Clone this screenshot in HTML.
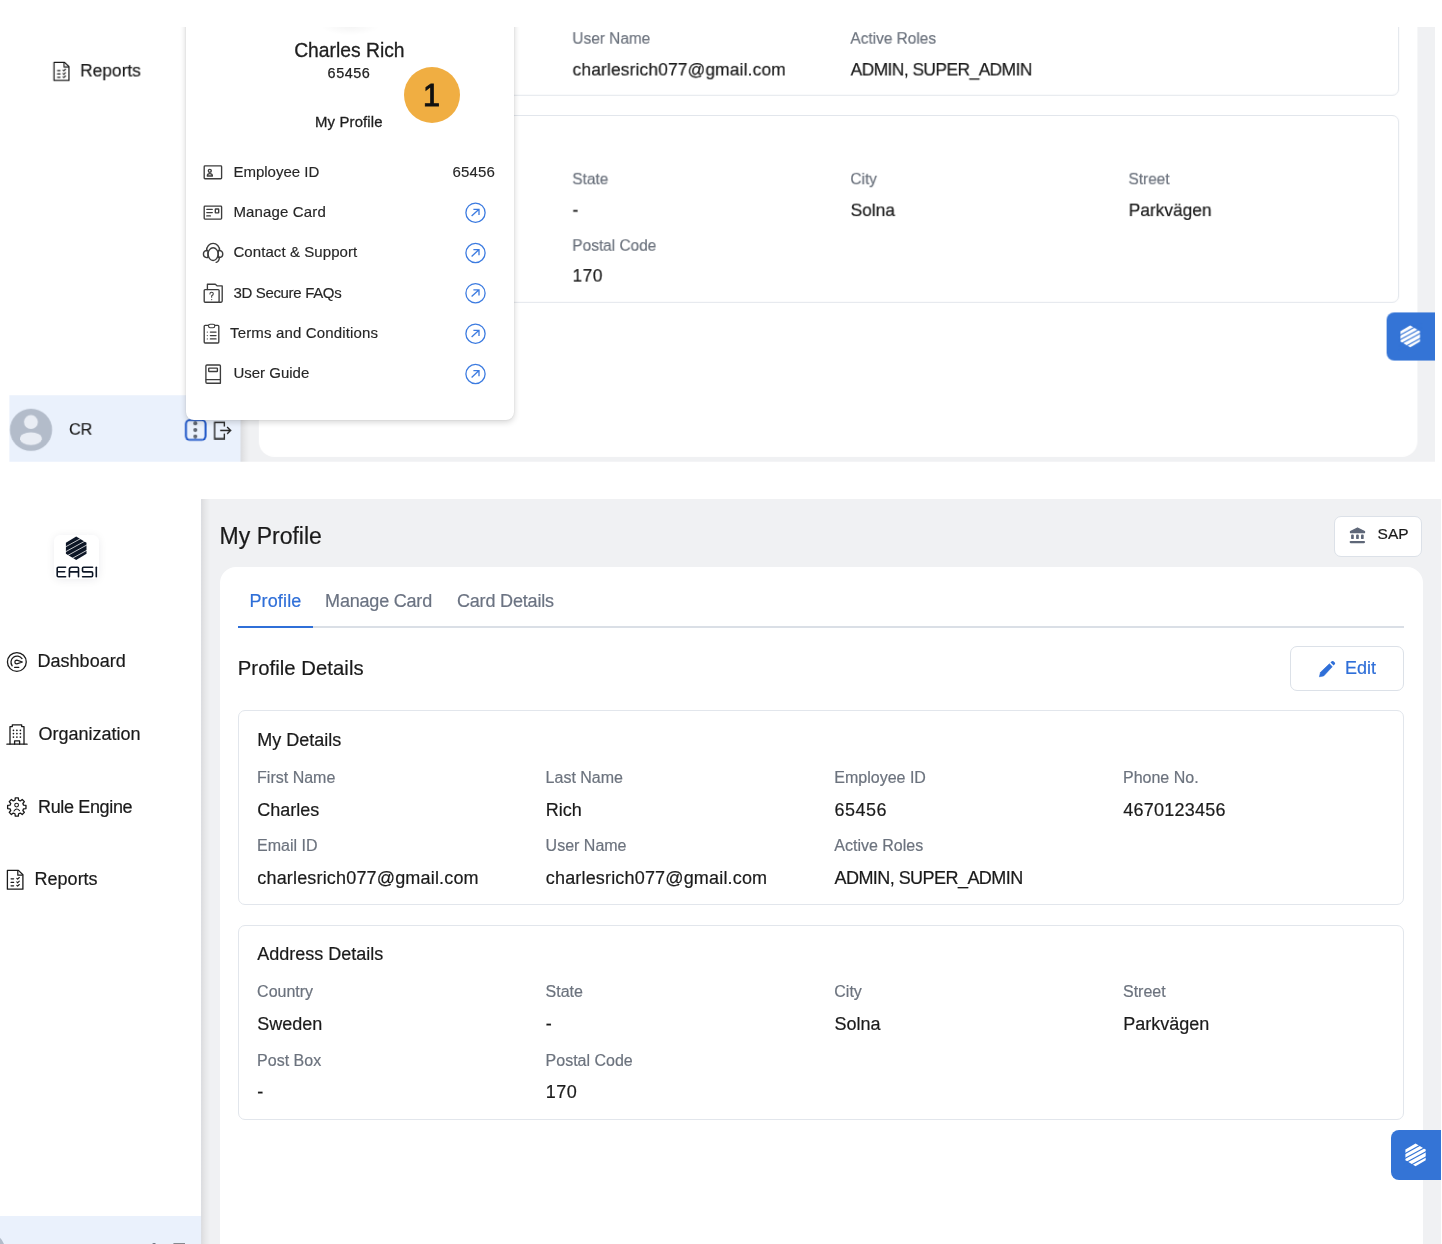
<!DOCTYPE html>
<html><head><meta charset="utf-8"><title>My Profile</title>
<style>
html,body{margin:0;padding:0;}
body{width:1442px;height:1244px;position:relative;overflow:hidden;background:#fff;font-family:"Liberation Sans", sans-serif;}
.t{position:absolute;white-space:nowrap;line-height:1;-webkit-text-stroke-width:0.2px;}
.b{position:absolute;}
svg.b{overflow:visible;}
.view{position:absolute;overflow:hidden;}
.pg{position:absolute;left:0;top:0;width:1px;height:1px;will-change:transform;}
</style></head><body>
<div class="view" style="left:9px;top:27px;width:1426px;height:434.6px;">
  <div class="pg" style="left:-9px;top:-27px;transform-origin:0 0;transform:matrix(0.9631,0,0,0.9631,46.9,-775.9);">
<div class="b" style="left:-39.35px;top:499.00px;width:1480.64px;height:785.91px;background:#fff"></div>
<div class="b" style="left:200.80px;top:499.00px;width:1240.48px;height:785.91px;background:#F0F1F3"></div>
<div class="b" style="left:200.80px;top:499.00px;width:9.00px;height:785.91px;background:linear-gradient(90deg,#DADDE2 0px,#DFDFE1 1.5px,#E6E7E9 4px,#F0F1F3 9px)"></div>
<div class="b" style="left:54.30px;top:534.50px;width:44.50px;height:44.30px;background:#fff;border-radius:6px;box-shadow:0 1px 8px rgba(20,30,50,0.08)"></div>
<svg class="b" style="left:0.00px;top:0.00px;" width="110" height="600" viewBox="0 0 110 600"><polygon points="76.2,536.6 86.5,542.8502500000001 86.5,553.6497499999999 76.2,559.9 65.9,553.6497499999999 65.9,542.8502500000001" fill="#0D1626"/><line x1="63.900000000000006" y1="547.79" x2="88.5" y2="534.26" stroke="#fff" stroke-width="0.75"/><line x1="63.900000000000006" y1="552.68" x2="88.5" y2="539.15" stroke="#fff" stroke-width="0.75"/><line x1="63.900000000000006" y1="557.58" x2="88.5" y2="544.05" stroke="#fff" stroke-width="0.75"/><line x1="63.900000000000006" y1="562.94" x2="88.5" y2="549.41" stroke="#fff" stroke-width="0.75"/><path d="M65.6 567.2 H58.3 Q57.2 567.2 57.2 568.3 V575.6 Q57.2 576.7 58.3 576.7 H65.6 M57.4 571.8 H64.6" fill="none" stroke="#0D1626" stroke-width="1.6" stroke-linecap="round" stroke-linejoin="round"/><path d="M69.4 576.8 V569.5 Q69.4 567.2 71.7 567.2 H77.4 Q78.5 567.2 78.5 568.3 V576.8 M69.6 571.9 H78.3" fill="none" stroke="#0D1626" stroke-width="1.6" stroke-linecap="round" stroke-linejoin="round"/><path d="M92.6 567.2 H83.6 Q82.5 567.2 82.5 568.3 V570.8 Q82.5 571.9 83.6 571.9 H91.5 Q92.6 571.9 92.6 573 V575.6 Q92.6 576.7 91.5 576.7 H82.6" fill="none" stroke="#0D1626" stroke-width="1.6" stroke-linecap="round" stroke-linejoin="round"/><path d="M96.3 567.2 V576.8" fill="none" stroke="#0D1626" stroke-width="1.6" stroke-linecap="round" stroke-linejoin="round"/></svg>
<svg class="b" style="left:0.00px;top:0.00px;" width="40" height="900" viewBox="0 0 40 900"><circle cx="16.85" cy="661.95" r="9.4" fill="none" stroke="#1A1A1A" stroke-width="1.3" stroke-linecap="round" stroke-linejoin="round"/><path d="M22.0 658.6 A6.1 6.1 0 1 0 12.15 665.8" fill="none" stroke="#1A1A1A" stroke-width="1.3" stroke-linecap="round" stroke-linejoin="round"/><path d="M22.4 662.0 L16.8 660.1 A1.9 1.9 0 0 0 16.8 663.9 Z" fill="none" stroke="#1A1A1A" stroke-width="1.2" stroke-linejoin="round"/><path d="M14.6 667.3 H18.8" fill="none" stroke="#1A1A1A" stroke-width="1.3" stroke-linecap="round" stroke-linejoin="round"/><path d="M10 744 V726.6 H12.3 V724.8 H21.7 V726.6 H24 V744" fill="none" stroke="#1A1A1A" stroke-width="1.3" stroke-linecap="round" stroke-linejoin="round"/><path d="M6.9 744.2 H27.1" fill="none" stroke="#1A1A1A" stroke-width="1.3" stroke-linecap="round" stroke-linejoin="round"/><path d="M14.6 744 V740.9 H19.6 V744" fill="none" stroke="#1A1A1A" stroke-width="1.3" stroke-linecap="round" stroke-linejoin="round"/><circle cx="13.45" cy="730.3" r="0.85" fill="#1A1A1A"/><circle cx="13.45" cy="733.6" r="0.85" fill="#1A1A1A"/><circle cx="13.45" cy="737.1" r="0.85" fill="#1A1A1A"/><circle cx="16.9" cy="730.3" r="0.85" fill="#1A1A1A"/><circle cx="16.9" cy="733.6" r="0.85" fill="#1A1A1A"/><circle cx="16.9" cy="737.1" r="0.85" fill="#1A1A1A"/><circle cx="20.4" cy="730.3" r="0.85" fill="#1A1A1A"/><circle cx="20.4" cy="733.6" r="0.85" fill="#1A1A1A"/><circle cx="20.4" cy="737.1" r="0.85" fill="#1A1A1A"/><path d="M15.01 800.23 L15.27 797.83 L18.33 797.83 L18.59 800.23 L20.32 800.95 L22.21 799.43 L24.37 801.59 L22.85 803.48 L23.57 805.21 L25.97 805.47 L25.97 808.53 L23.57 808.79 L22.85 810.52 L24.37 812.41 L22.21 814.57 L20.32 813.05 L18.59 813.77 L18.33 816.17 L15.27 816.17 L15.01 813.77 L13.28 813.05 L11.39 814.57 L9.23 812.41 L10.75 810.52 L10.03 808.79 L7.63 808.53 L7.63 805.47 L10.03 805.21 L10.75 803.48 L9.23 801.59 L11.39 799.43 L13.28 800.95Z" fill="none" stroke="#1A1A1A" stroke-width="1.3" stroke-linecap="round" stroke-linejoin="round"/><circle cx="16.6" cy="805.1" r="1.9" fill="none" stroke="#1A1A1A" stroke-width="1.1"/><path d="M14.0 811.0 Q16.7 807.3 19.5 810.7" fill="none" stroke="#1A1A1A" stroke-width="1.1" stroke-linecap="round"/><path d="M7.4 870.4 H18.4 L22.9 874.8 V889.2 H7.4 Z" fill="none" stroke="#1A1A1A" stroke-width="1.3" stroke-linecap="round" stroke-linejoin="round"/><path d="M17.8 870.6 V875.2 H22.7" fill="none" stroke="#1A1A1A" stroke-width="1.2" stroke-linejoin="round"/><path d="M11.1 878.8 H13.6" fill="none" stroke="#1A1A1A" stroke-width="1.3" stroke-linecap="round" stroke-linejoin="round"/><path d="M16.8 878.3 L17.6 879.1999999999999 L19.3 877.5" fill="none" stroke="#1A1A1A" stroke-width="1.1" stroke-linecap="round" stroke-linejoin="round"/><path d="M11.1 882.4 H13.6" fill="none" stroke="#1A1A1A" stroke-width="1.3" stroke-linecap="round" stroke-linejoin="round"/><path d="M16.8 881.9 L17.6 882.8 L19.3 881.1" fill="none" stroke="#1A1A1A" stroke-width="1.1" stroke-linecap="round" stroke-linejoin="round"/><path d="M11.1 885.8 H13.6" fill="none" stroke="#1A1A1A" stroke-width="1.3" stroke-linecap="round" stroke-linejoin="round"/><path d="M16.8 885.3 L17.6 886.1999999999999 L19.3 884.5" fill="none" stroke="#1A1A1A" stroke-width="1.1" stroke-linecap="round" stroke-linejoin="round"/></svg>
<div class="t" style="left:37.60px;top:651.96px;font-size:18px;color:#1A1A1A;font-weight:400;">Dashboard</div>
<div class="t" style="left:38.50px;top:724.66px;font-size:18px;color:#1A1A1A;font-weight:400;">Organization</div>
<div class="t" style="left:38.00px;top:797.56px;font-size:18px;color:#1A1A1A;font-weight:400;letter-spacing:-0.35px">Rule Engine</div>
<div class="t" style="left:34.60px;top:869.76px;font-size:18px;color:#1A1A1A;font-weight:400;">Reports</div>
<div class="b" style="left:-39.35px;top:1215.97px;width:239.95px;height:68.94px;background:#EAF1FC"></div>
<svg class="b" style="left:-40.00px;top:1200.00px;" width="240" height="90" viewBox="-40 1200 240 90"><circle cx="-16.51" cy="1251.95" r="21.91" fill="#B3BCCA"/><circle cx="-16.61" cy="1243.80" r="7.27" fill="#E9EDF4"/><ellipse cx="-16.61" cy="1261.03" rx="11.42" ry="6.65" fill="#E9EDF4"/><circle cx="154.09" cy="1245.15" r="2.08" fill="#5F6672"/><circle cx="154.09" cy="1252.10" r="2.08" fill="#5F6672"/><circle cx="154.09" cy="1258.85" r="2.08" fill="#5F6672"/><rect x="144.33" y="1241.72" width="20.35" height="20.56" rx="4.15" fill="none" stroke="#1E56C8" stroke-width="2.08"/><path d="M184.30 1248.57 V1244.32 H174.13 V1260.93 H184.30 V1255.74" fill="none" stroke="#222" stroke-width="1.40" stroke-linecap="butt" stroke-linejoin="miter"/><path d="M179.94 1252.52 H190.74 M187.10 1248.99 L190.74 1252.52 L187.10 1256.05" fill="none" stroke="#222" stroke-width="1.40" stroke-linecap="butt" stroke-linejoin="miter"/></svg>
<div class="t" style="left:22.98px;top:1244.11px;font-size:16.8px;color:#1A1A1A;font-weight:400;">CR</div>
<div class="t" style="left:219.60px;top:524.93px;font-size:23px;color:#1A1A1A;font-weight:400;">My Profile</div>
<div class="b" style="left:1334.20px;top:516.10px;width:88.00px;height:41.30px;background:#fff;border:1px solid #DCE1E8;border-radius:7px;box-sizing:border-box"></div>
<svg class="b" style="left:1340.00px;top:520.00px;" width="30" height="30" viewBox="1340 520 30 30"><path d="M1350.4 532.6 V531.4 L1357.5 527.9 L1364.6 531.4 V532.6 Z" fill="#5E6778" stroke="#5E6778" stroke-width="1.1" stroke-linejoin="round"/><rect x="1351.1" y="534.6" width="2.7" height="4.5" rx="0.9" fill="#5E6778"/><rect x="1356.1" y="534.6" width="2.7" height="4.5" rx="0.9" fill="#5E6778"/><rect x="1361.0" y="534.6" width="2.7" height="4.5" rx="0.9" fill="#5E6778"/><rect x="1349.6" y="540.9" width="15.5" height="2.3" rx="1.1" fill="#5E6778"/></svg>
<div class="t" style="left:1377.60px;top:526.28px;font-size:15.5px;color:#1A1A1A;font-weight:400;">SAP</div>
<div class="b" style="left:220.00px;top:566.50px;width:1202.70px;height:713.50px;background:#fff;border-radius:16px"></div>
<div class="t" style="left:249.40px;top:591.56px;font-size:18px;color:#2F6FD8;font-weight:400;letter-spacing:0.15px">Profile</div>
<div class="t" style="left:325.10px;top:591.56px;font-size:18px;color:#6B7382;font-weight:400;letter-spacing:-0.2px">Manage Card</div>
<div class="t" style="left:456.90px;top:591.56px;font-size:18px;color:#6B7382;font-weight:400;letter-spacing:-0.17px">Card Details</div>
<div class="b" style="left:238.00px;top:625.90px;width:1166.20px;height:2.20px;background:#DADFE6"></div>
<div class="b" style="left:238.00px;top:625.60px;width:75.20px;height:2.60px;background:#2F6FD8"></div>
<div class="t" style="left:237.80px;top:658.42px;font-size:20.3px;color:#1A1A1A;font-weight:400;letter-spacing:0.05px">Profile Details</div>
<div class="b" style="left:1290.10px;top:646.30px;width:114.00px;height:45.00px;background:#fff;border:1px solid #DCE1E8;border-radius:7px;box-sizing:border-box"></div>
<svg class="b" style="left:1310.00px;top:650.00px;" width="30" height="30" viewBox="1310 650 30 30"><path d="M1319.4 676.8 L1320.5 672.3 L1329.4 663.8 L1332.3 666.7 L1323.7 675.9 Z" fill="#2F6FD8" stroke="#2F6FD8" stroke-width="0.6" stroke-linejoin="round"/><path d="M1330.5 662.5 L1331.7 661.3 Q1332.6 660.5 1333.5 661.3 L1334.8 662.6 Q1335.6 663.5 1334.8 664.3 L1333.6 665.6 Z" fill="#2F6FD8"/></svg>
<div class="t" style="left:1345.00px;top:659.46px;font-size:18px;color:#2F6FD8;font-weight:400;">Edit</div>
<div class="b" style="left:238.30px;top:710.30px;width:1165.90px;height:195.00px;background:#fff;border:1px solid #E2E6EC;border-radius:7px;box-sizing:border-box"></div>
<div class="t" style="left:257.20px;top:730.56px;font-size:18px;color:#1A1A1A;font-weight:400;">My Details</div>
<div class="t" style="left:257.10px;top:769.96px;font-size:16px;color:#6C737E;font-weight:400;">First Name</div>
<div class="t" style="left:257.30px;top:800.56px;font-size:18px;color:#1B1B1B;font-weight:400;letter-spacing:0px">Charles</div>
<div class="t" style="left:545.60px;top:769.96px;font-size:16px;color:#6C737E;font-weight:400;">Last Name</div>
<div class="t" style="left:545.80px;top:800.56px;font-size:18px;color:#1B1B1B;font-weight:400;letter-spacing:0px">Rich</div>
<div class="t" style="left:834.30px;top:769.96px;font-size:16px;color:#6C737E;font-weight:400;">Employee ID</div>
<div class="t" style="left:834.50px;top:800.56px;font-size:18px;color:#1B1B1B;font-weight:400;letter-spacing:0.5px">65456</div>
<div class="t" style="left:1123.00px;top:769.96px;font-size:16px;color:#6C737E;font-weight:400;">Phone No.</div>
<div class="t" style="left:1123.20px;top:800.56px;font-size:18px;color:#1B1B1B;font-weight:400;letter-spacing:0.25px">4670123456</div>
<div class="t" style="left:257.10px;top:838.26px;font-size:16px;color:#6C737E;font-weight:400;">Email ID</div>
<div class="t" style="left:257.30px;top:868.96px;font-size:18px;color:#1B1B1B;font-weight:400;letter-spacing:0.17px">charlesrich077@gmail.com</div>
<div class="t" style="left:545.60px;top:838.26px;font-size:16px;color:#6C737E;font-weight:400;">User Name</div>
<div class="t" style="left:545.80px;top:868.96px;font-size:18px;color:#1B1B1B;font-weight:400;letter-spacing:0.17px">charlesrich077@gmail.com</div>
<div class="t" style="left:834.30px;top:838.26px;font-size:16px;color:#6C737E;font-weight:400;">Active Roles</div>
<div class="t" style="left:834.50px;top:868.96px;font-size:18px;color:#1B1B1B;font-weight:400;letter-spacing:-0.55px">ADMIN, SUPER_ADMIN</div>
<div class="b" style="left:238.30px;top:924.70px;width:1165.90px;height:195.00px;background:#fff;border:1px solid #E2E6EC;border-radius:7px;box-sizing:border-box"></div>
<div class="t" style="left:257.20px;top:944.96px;font-size:18px;color:#1A1A1A;font-weight:400;">Address Details</div>
<div class="t" style="left:257.10px;top:984.36px;font-size:16px;color:#6C737E;font-weight:400;">Country</div>
<div class="t" style="left:257.30px;top:1014.96px;font-size:18px;color:#1B1B1B;font-weight:400;letter-spacing:0px">Sweden</div>
<div class="t" style="left:545.60px;top:984.36px;font-size:16px;color:#6C737E;font-weight:400;">State</div>
<div class="t" style="left:545.80px;top:1014.96px;font-size:18px;color:#1B1B1B;font-weight:400;letter-spacing:0px">-</div>
<div class="t" style="left:834.30px;top:984.36px;font-size:16px;color:#6C737E;font-weight:400;">City</div>
<div class="t" style="left:834.50px;top:1014.96px;font-size:18px;color:#1B1B1B;font-weight:400;letter-spacing:0px">Solna</div>
<div class="t" style="left:1123.00px;top:984.36px;font-size:16px;color:#6C737E;font-weight:400;">Street</div>
<div class="t" style="left:1123.20px;top:1014.96px;font-size:18px;color:#1B1B1B;font-weight:400;letter-spacing:0px">Parkv&auml;gen</div>
<div class="t" style="left:257.10px;top:1052.66px;font-size:16px;color:#6C737E;font-weight:400;">Post Box</div>
<div class="t" style="left:257.30px;top:1083.36px;font-size:18px;color:#1B1B1B;font-weight:400;letter-spacing:0px">-</div>
<div class="t" style="left:545.60px;top:1052.66px;font-size:16px;color:#6C737E;font-weight:400;">Postal Code</div>
<div class="t" style="left:545.80px;top:1083.36px;font-size:18px;color:#1B1B1B;font-weight:400;letter-spacing:0.5px">170</div>
<div class="b" style="left:1390.80px;top:1130.00px;width:50.48px;height:49.80px;background:#3474D6;border-radius:8px 0 0 8px"></div>
<svg class="b" style="left:1395.00px;top:1135.00px;" width="40" height="40" viewBox="1395 1135 40 40"><polygon points="1415.55,1143.4 1425.7,1149.55325 1425.7,1160.14675 1415.55,1166.3 1405.4,1160.14675 1405.4,1149.55325" fill="#fff"/><line x1="1403.4" y1="1154.43" x2="1427.7" y2="1141.07" stroke="#3474D6" stroke-width="1.15"/><line x1="1403.4" y1="1159.24" x2="1427.7" y2="1145.88" stroke="#3474D6" stroke-width="1.15"/><line x1="1403.4" y1="1164.05" x2="1427.7" y2="1150.69" stroke="#3474D6" stroke-width="1.15"/><line x1="1403.4" y1="1169.32" x2="1427.7" y2="1155.95" stroke="#3474D6" stroke-width="1.15"/></svg>
  </div>
  <div class="pg" style="left:-9px;top:-27px;will-change:transform;">
<div class="b" style="left:186.00px;top:-30.00px;width:328.00px;height:450.30px;background:#fff;border-radius:8px;box-shadow:0 2px 6px rgba(0,0,0,0.18),0 0 2px rgba(0,0,0,0.10)"></div>
<div class="b" style="left:318.00px;top:20.00px;width:64.00px;height:16.00px;background:radial-gradient(ellipse at 50% 40%, rgba(0,0,0,0.045), rgba(0,0,0,0) 65%)"></div>
<div class="t" style="left:294.20px;top:40.96px;font-size:19.3px;color:#1F1F1F;font-weight:400;-webkit-text-stroke-width:0.3px">Charles Rich</div>
<div class="t" style="left:327.60px;top:65.81px;font-size:14.4px;color:#222;font-weight:400;letter-spacing:0.55px;-webkit-text-stroke:0.25px #222">65456</div>
<div class="t" style="left:315.00px;top:114.69px;font-size:14.9px;color:#1F1F1F;font-weight:400;letter-spacing:0.15px;-webkit-text-stroke:0.3px #1F1F1F">My Profile</div>
<div class="t" style="left:233.40px;top:163.70px;font-size:15px;color:#262626;font-weight:400;letter-spacing:0px;-webkit-text-stroke:0.15px #262626">Employee ID</div>
<div class="t" style="left:233.40px;top:204.00px;font-size:15px;color:#262626;font-weight:400;letter-spacing:0.15px;-webkit-text-stroke:0.15px #262626">Manage Card</div>
<div class="t" style="left:233.40px;top:244.30px;font-size:15px;color:#262626;font-weight:400;letter-spacing:0.08px;-webkit-text-stroke:0.15px #262626">Contact &amp; Support</div>
<div class="t" style="left:233.40px;top:284.50px;font-size:15px;color:#262626;font-weight:400;letter-spacing:-0.33px;-webkit-text-stroke:0.15px #262626">3D Secure FAQs</div>
<div class="t" style="left:230.00px;top:325.00px;font-size:15px;color:#262626;font-weight:400;letter-spacing:0.16px;-webkit-text-stroke:0.15px #262626">Terms and Conditions</div>
<div class="t" style="left:233.40px;top:365.30px;font-size:15px;color:#262626;font-weight:400;letter-spacing:0px;-webkit-text-stroke:0.15px #262626">User Guide</div>
<div class="t" style="left:452.60px;top:164.20px;font-size:15px;color:#262626;font-weight:400;letter-spacing:0.15px;-webkit-text-stroke:0.15px #262626">65456</div>
<svg class="b" style="left:190.00px;top:150.00px;" width="310" height="250" viewBox="190 150 310 250"><rect x="204.2" y="165.9" width="17.4" height="12.9" rx="0.8" fill="none" stroke="#3D3D3D" stroke-width="1.35" stroke-linecap="round" stroke-linejoin="round"/><circle cx="209.8" cy="170.8" r="1.5" fill="none" stroke="#3D3D3D" stroke-width="1.35" stroke-linecap="round" stroke-linejoin="round"/><path d="M207.3 176.0 Q207.3 173.6 209.8 173.6 Q212.4 173.6 212.4 176.0 Z" fill="none" stroke="#3D3D3D" stroke-width="1.35" stroke-linecap="round" stroke-linejoin="round"/><rect x="204.2" y="206.1" width="17.4" height="13.0" rx="0.8" fill="none" stroke="#3D3D3D" stroke-width="1.35" stroke-linecap="round" stroke-linejoin="round"/><path d="M206.8 209.3 H212.3 M206.8 212.6 H212.3 M206.8 215.9 H210.4" fill="none" stroke="#3D3D3D" stroke-width="1.35" stroke-linecap="round" stroke-linejoin="round"/><rect x="215.3" y="209.0" width="3.4" height="3.8" rx="0.4" fill="none" stroke="#3D3D3D" stroke-width="1.35" stroke-linecap="round" stroke-linejoin="round"/><ellipse cx="213.1" cy="254.1" rx="5.0" ry="6.4" fill="none" stroke="#3D3D3D" stroke-width="1.35" stroke-linecap="round" stroke-linejoin="round"/><path d="M206.5 250.8 A6.6 7.4 0 0 1 219.7 250.8" fill="none" stroke="#3D3D3D" stroke-width="1.35" stroke-linecap="round" stroke-linejoin="round"/><path d="M207.9 250.3 H206.6 Q203.4 251.0 203.4 254.0 Q203.4 257.2 206.6 257.6 H207.9 Z" fill="none" stroke="#3D3D3D" stroke-width="1.35" stroke-linecap="round" stroke-linejoin="round"/><path d="M218.3 250.3 H219.6 Q222.8 251.0 222.8 254.0 Q222.8 257.2 219.6 257.6 H218.3 Z" fill="none" stroke="#3D3D3D" stroke-width="1.35" stroke-linecap="round" stroke-linejoin="round"/><path d="M219.5 257.0 Q219.3 261.3 216.2 262.4" fill="none" stroke="#3D3D3D" stroke-width="1.35" stroke-linecap="round" stroke-linejoin="round"/><rect x="204.2" y="289.6" width="14.9" height="12.6" rx="0.9" fill="none" stroke="#3D3D3D" stroke-width="1.35" stroke-linecap="round" stroke-linejoin="round"/><path d="M207.4 289.5 V284.2 H215.3 L217.3 285.9 H222.2 V301.1 Q222.2 302.2 221.1 302.2 H219.1" fill="none" stroke="#3D3D3D" stroke-width="1.35" stroke-linecap="round" stroke-linejoin="round"/><path d="M209.9 294.0 Q209.9 292.2 211.6 292.2 Q213.3 292.2 213.3 293.8 Q213.3 295.0 211.7 295.8 V297.3" fill="none" stroke="#3D3D3D" stroke-width="1.05" stroke-linecap="round"/><circle cx="211.7" cy="299.6" r="0.6" fill="#3D3D3D"/><rect x="204.2" y="325.4" width="14.6" height="17.6" rx="0.9" fill="none" stroke="#3D3D3D" stroke-width="1.35" stroke-linecap="round" stroke-linejoin="round"/><rect x="208.5" y="324.3" width="6.3" height="3.5" rx="1.7" fill="#fff" stroke="#3D3D3D" stroke-width="1.1"/><circle cx="207.3" cy="332.1" r="0.6" fill="#3D3D3D"/><path d="M210.4 332.1 H216" fill="none" stroke="#3D3D3D" stroke-width="1.35" stroke-linecap="round" stroke-linejoin="round"/><circle cx="207.3" cy="335.6" r="0.6" fill="#3D3D3D"/><path d="M210.4 335.6 H216" fill="none" stroke="#3D3D3D" stroke-width="1.35" stroke-linecap="round" stroke-linejoin="round"/><circle cx="207.3" cy="338.9" r="0.6" fill="#3D3D3D"/><path d="M210.4 338.9 H216" fill="none" stroke="#3D3D3D" stroke-width="1.35" stroke-linecap="round" stroke-linejoin="round"/><path d="M207.0 383.2 H220.4 V366.0 Q220.4 365.0 219.4 365.0 H207.0 Q205.9 365.0 205.9 366.1 V382.0 Q205.9 383.2 207.0 383.2 Z" fill="none" stroke="#3D3D3D" stroke-width="1.35" stroke-linecap="round" stroke-linejoin="round"/><path d="M206.2 379.6 H220.3" fill="none" stroke="#3D3D3D" stroke-width="1.35" stroke-linecap="round" stroke-linejoin="round"/><rect x="208.7" y="368.1" width="8.7" height="3.4" rx="0.5" fill="none" stroke="#3D3D3D" stroke-width="1.35" stroke-linecap="round" stroke-linejoin="round"/><circle cx="475.5" cy="212.7" r="9.6" fill="none" stroke="#3C7BE0" stroke-width="1.3"/><path d="M471.6 216.1 L479.0 209.29999999999998 M473.4 209.29999999999998 H479.0 V214.89999999999998" fill="none" stroke="#3C7BE0" stroke-width="1.3" stroke-linecap="butt" stroke-linejoin="miter"/><circle cx="475.5" cy="253.0" r="9.6" fill="none" stroke="#3C7BE0" stroke-width="1.3"/><path d="M471.6 256.4 L479.0 249.6 M473.4 249.6 H479.0 V255.2" fill="none" stroke="#3C7BE0" stroke-width="1.3" stroke-linecap="butt" stroke-linejoin="miter"/><circle cx="475.5" cy="293.2" r="9.6" fill="none" stroke="#3C7BE0" stroke-width="1.3"/><path d="M471.6 296.59999999999997 L479.0 289.8 M473.4 289.8 H479.0 V295.4" fill="none" stroke="#3C7BE0" stroke-width="1.3" stroke-linecap="butt" stroke-linejoin="miter"/><circle cx="475.5" cy="333.7" r="9.6" fill="none" stroke="#3C7BE0" stroke-width="1.3"/><path d="M471.6 337.09999999999997 L479.0 330.3 M473.4 330.3 H479.0 V335.9" fill="none" stroke="#3C7BE0" stroke-width="1.3" stroke-linecap="butt" stroke-linejoin="miter"/><circle cx="475.5" cy="374.0" r="9.6" fill="none" stroke="#3C7BE0" stroke-width="1.3"/><path d="M471.6 377.4 L479.0 370.6 M473.4 370.6 H479.0 V376.2" fill="none" stroke="#3C7BE0" stroke-width="1.3" stroke-linecap="butt" stroke-linejoin="miter"/></svg>
<div class="b" style="left:404.00px;top:67.00px;width:56.00px;height:56.00px;background:#F0AE42;border-radius:50%"></div>
<div class="t" style="left:423.00px;top:80.18px;font-size:30.5px;color:#111;font-weight:400;-webkit-text-stroke-width:0.9px">1</div>
  </div>
</div>
<div class="view" style="left:0;top:499px;width:1442px;height:745px;">
  <div class="pg" style="left:0;top:-499px;">
<div class="b" style="left:-39.35px;top:499.00px;width:1480.64px;height:785.91px;background:#fff"></div>
<div class="b" style="left:200.80px;top:499.00px;width:1240.48px;height:785.91px;background:#F0F1F3"></div>
<div class="b" style="left:200.80px;top:499.00px;width:9.00px;height:785.91px;background:linear-gradient(90deg,#DADDE2 0px,#DFDFE1 1.5px,#E6E7E9 4px,#F0F1F3 9px)"></div>
<div class="b" style="left:54.30px;top:534.50px;width:44.50px;height:44.30px;background:#fff;border-radius:6px;box-shadow:0 1px 8px rgba(20,30,50,0.08)"></div>
<svg class="b" style="left:0.00px;top:0.00px;" width="110" height="600" viewBox="0 0 110 600"><polygon points="76.2,536.6 86.5,542.8502500000001 86.5,553.6497499999999 76.2,559.9 65.9,553.6497499999999 65.9,542.8502500000001" fill="#0D1626"/><line x1="63.900000000000006" y1="547.79" x2="88.5" y2="534.26" stroke="#fff" stroke-width="0.75"/><line x1="63.900000000000006" y1="552.68" x2="88.5" y2="539.15" stroke="#fff" stroke-width="0.75"/><line x1="63.900000000000006" y1="557.58" x2="88.5" y2="544.05" stroke="#fff" stroke-width="0.75"/><line x1="63.900000000000006" y1="562.94" x2="88.5" y2="549.41" stroke="#fff" stroke-width="0.75"/><path d="M65.6 567.2 H58.3 Q57.2 567.2 57.2 568.3 V575.6 Q57.2 576.7 58.3 576.7 H65.6 M57.4 571.8 H64.6" fill="none" stroke="#0D1626" stroke-width="1.6" stroke-linecap="round" stroke-linejoin="round"/><path d="M69.4 576.8 V569.5 Q69.4 567.2 71.7 567.2 H77.4 Q78.5 567.2 78.5 568.3 V576.8 M69.6 571.9 H78.3" fill="none" stroke="#0D1626" stroke-width="1.6" stroke-linecap="round" stroke-linejoin="round"/><path d="M92.6 567.2 H83.6 Q82.5 567.2 82.5 568.3 V570.8 Q82.5 571.9 83.6 571.9 H91.5 Q92.6 571.9 92.6 573 V575.6 Q92.6 576.7 91.5 576.7 H82.6" fill="none" stroke="#0D1626" stroke-width="1.6" stroke-linecap="round" stroke-linejoin="round"/><path d="M96.3 567.2 V576.8" fill="none" stroke="#0D1626" stroke-width="1.6" stroke-linecap="round" stroke-linejoin="round"/></svg>
<svg class="b" style="left:0.00px;top:0.00px;" width="40" height="900" viewBox="0 0 40 900"><circle cx="16.85" cy="661.95" r="9.4" fill="none" stroke="#1A1A1A" stroke-width="1.3" stroke-linecap="round" stroke-linejoin="round"/><path d="M22.0 658.6 A6.1 6.1 0 1 0 12.15 665.8" fill="none" stroke="#1A1A1A" stroke-width="1.3" stroke-linecap="round" stroke-linejoin="round"/><path d="M22.4 662.0 L16.8 660.1 A1.9 1.9 0 0 0 16.8 663.9 Z" fill="none" stroke="#1A1A1A" stroke-width="1.2" stroke-linejoin="round"/><path d="M14.6 667.3 H18.8" fill="none" stroke="#1A1A1A" stroke-width="1.3" stroke-linecap="round" stroke-linejoin="round"/><path d="M10 744 V726.6 H12.3 V724.8 H21.7 V726.6 H24 V744" fill="none" stroke="#1A1A1A" stroke-width="1.3" stroke-linecap="round" stroke-linejoin="round"/><path d="M6.9 744.2 H27.1" fill="none" stroke="#1A1A1A" stroke-width="1.3" stroke-linecap="round" stroke-linejoin="round"/><path d="M14.6 744 V740.9 H19.6 V744" fill="none" stroke="#1A1A1A" stroke-width="1.3" stroke-linecap="round" stroke-linejoin="round"/><circle cx="13.45" cy="730.3" r="0.85" fill="#1A1A1A"/><circle cx="13.45" cy="733.6" r="0.85" fill="#1A1A1A"/><circle cx="13.45" cy="737.1" r="0.85" fill="#1A1A1A"/><circle cx="16.9" cy="730.3" r="0.85" fill="#1A1A1A"/><circle cx="16.9" cy="733.6" r="0.85" fill="#1A1A1A"/><circle cx="16.9" cy="737.1" r="0.85" fill="#1A1A1A"/><circle cx="20.4" cy="730.3" r="0.85" fill="#1A1A1A"/><circle cx="20.4" cy="733.6" r="0.85" fill="#1A1A1A"/><circle cx="20.4" cy="737.1" r="0.85" fill="#1A1A1A"/><path d="M15.01 800.23 L15.27 797.83 L18.33 797.83 L18.59 800.23 L20.32 800.95 L22.21 799.43 L24.37 801.59 L22.85 803.48 L23.57 805.21 L25.97 805.47 L25.97 808.53 L23.57 808.79 L22.85 810.52 L24.37 812.41 L22.21 814.57 L20.32 813.05 L18.59 813.77 L18.33 816.17 L15.27 816.17 L15.01 813.77 L13.28 813.05 L11.39 814.57 L9.23 812.41 L10.75 810.52 L10.03 808.79 L7.63 808.53 L7.63 805.47 L10.03 805.21 L10.75 803.48 L9.23 801.59 L11.39 799.43 L13.28 800.95Z" fill="none" stroke="#1A1A1A" stroke-width="1.3" stroke-linecap="round" stroke-linejoin="round"/><circle cx="16.6" cy="805.1" r="1.9" fill="none" stroke="#1A1A1A" stroke-width="1.1"/><path d="M14.0 811.0 Q16.7 807.3 19.5 810.7" fill="none" stroke="#1A1A1A" stroke-width="1.1" stroke-linecap="round"/><path d="M7.4 870.4 H18.4 L22.9 874.8 V889.2 H7.4 Z" fill="none" stroke="#1A1A1A" stroke-width="1.3" stroke-linecap="round" stroke-linejoin="round"/><path d="M17.8 870.6 V875.2 H22.7" fill="none" stroke="#1A1A1A" stroke-width="1.2" stroke-linejoin="round"/><path d="M11.1 878.8 H13.6" fill="none" stroke="#1A1A1A" stroke-width="1.3" stroke-linecap="round" stroke-linejoin="round"/><path d="M16.8 878.3 L17.6 879.1999999999999 L19.3 877.5" fill="none" stroke="#1A1A1A" stroke-width="1.1" stroke-linecap="round" stroke-linejoin="round"/><path d="M11.1 882.4 H13.6" fill="none" stroke="#1A1A1A" stroke-width="1.3" stroke-linecap="round" stroke-linejoin="round"/><path d="M16.8 881.9 L17.6 882.8 L19.3 881.1" fill="none" stroke="#1A1A1A" stroke-width="1.1" stroke-linecap="round" stroke-linejoin="round"/><path d="M11.1 885.8 H13.6" fill="none" stroke="#1A1A1A" stroke-width="1.3" stroke-linecap="round" stroke-linejoin="round"/><path d="M16.8 885.3 L17.6 886.1999999999999 L19.3 884.5" fill="none" stroke="#1A1A1A" stroke-width="1.1" stroke-linecap="round" stroke-linejoin="round"/></svg>
<div class="t" style="left:37.60px;top:651.96px;font-size:18px;color:#1A1A1A;font-weight:400;">Dashboard</div>
<div class="t" style="left:38.50px;top:724.66px;font-size:18px;color:#1A1A1A;font-weight:400;">Organization</div>
<div class="t" style="left:38.00px;top:797.56px;font-size:18px;color:#1A1A1A;font-weight:400;letter-spacing:-0.35px">Rule Engine</div>
<div class="t" style="left:34.60px;top:869.76px;font-size:18px;color:#1A1A1A;font-weight:400;">Reports</div>
<div class="b" style="left:-39.35px;top:1215.97px;width:239.95px;height:68.94px;background:#EAF1FC"></div>
<svg class="b" style="left:-40.00px;top:1200.00px;" width="240" height="90" viewBox="-40 1200 240 90"><circle cx="-16.51" cy="1251.95" r="21.91" fill="#B3BCCA"/><circle cx="-16.61" cy="1243.80" r="7.27" fill="#E9EDF4"/><ellipse cx="-16.61" cy="1261.03" rx="11.42" ry="6.65" fill="#E9EDF4"/><circle cx="154.09" cy="1245.15" r="2.08" fill="#5F6672"/><circle cx="154.09" cy="1252.10" r="2.08" fill="#5F6672"/><circle cx="154.09" cy="1258.85" r="2.08" fill="#5F6672"/><path d="M184.30 1248.57 V1244.32 H174.13 V1260.93 H184.30 V1255.74" fill="none" stroke="#222" stroke-width="1.40" stroke-linecap="butt" stroke-linejoin="miter"/><path d="M179.94 1252.52 H190.74 M187.10 1248.99 L190.74 1252.52 L187.10 1256.05" fill="none" stroke="#222" stroke-width="1.40" stroke-linecap="butt" stroke-linejoin="miter"/></svg>
<div class="t" style="left:22.98px;top:1244.11px;font-size:16.8px;color:#1A1A1A;font-weight:400;">CR</div>
<div class="t" style="left:219.60px;top:524.93px;font-size:23px;color:#1A1A1A;font-weight:400;">My Profile</div>
<div class="b" style="left:1334.20px;top:516.10px;width:88.00px;height:41.30px;background:#fff;border:1px solid #DCE1E8;border-radius:7px;box-sizing:border-box"></div>
<svg class="b" style="left:1340.00px;top:520.00px;" width="30" height="30" viewBox="1340 520 30 30"><path d="M1350.4 532.6 V531.4 L1357.5 527.9 L1364.6 531.4 V532.6 Z" fill="#5E6778" stroke="#5E6778" stroke-width="1.1" stroke-linejoin="round"/><rect x="1351.1" y="534.6" width="2.7" height="4.5" rx="0.9" fill="#5E6778"/><rect x="1356.1" y="534.6" width="2.7" height="4.5" rx="0.9" fill="#5E6778"/><rect x="1361.0" y="534.6" width="2.7" height="4.5" rx="0.9" fill="#5E6778"/><rect x="1349.6" y="540.9" width="15.5" height="2.3" rx="1.1" fill="#5E6778"/></svg>
<div class="t" style="left:1377.60px;top:526.28px;font-size:15.5px;color:#1A1A1A;font-weight:400;">SAP</div>
<div class="b" style="left:220.00px;top:566.50px;width:1202.70px;height:713.50px;background:#fff;border-radius:16px"></div>
<div class="t" style="left:249.40px;top:591.56px;font-size:18px;color:#2F6FD8;font-weight:400;letter-spacing:0.15px">Profile</div>
<div class="t" style="left:325.10px;top:591.56px;font-size:18px;color:#6B7382;font-weight:400;letter-spacing:-0.2px">Manage Card</div>
<div class="t" style="left:456.90px;top:591.56px;font-size:18px;color:#6B7382;font-weight:400;letter-spacing:-0.17px">Card Details</div>
<div class="b" style="left:238.00px;top:625.90px;width:1166.20px;height:2.20px;background:#DADFE6"></div>
<div class="b" style="left:238.00px;top:625.60px;width:75.20px;height:2.60px;background:#2F6FD8"></div>
<div class="t" style="left:237.80px;top:658.42px;font-size:20.3px;color:#1A1A1A;font-weight:400;letter-spacing:0.05px">Profile Details</div>
<div class="b" style="left:1290.10px;top:646.30px;width:114.00px;height:45.00px;background:#fff;border:1px solid #DCE1E8;border-radius:7px;box-sizing:border-box"></div>
<svg class="b" style="left:1310.00px;top:650.00px;" width="30" height="30" viewBox="1310 650 30 30"><path d="M1319.4 676.8 L1320.5 672.3 L1329.4 663.8 L1332.3 666.7 L1323.7 675.9 Z" fill="#2F6FD8" stroke="#2F6FD8" stroke-width="0.6" stroke-linejoin="round"/><path d="M1330.5 662.5 L1331.7 661.3 Q1332.6 660.5 1333.5 661.3 L1334.8 662.6 Q1335.6 663.5 1334.8 664.3 L1333.6 665.6 Z" fill="#2F6FD8"/></svg>
<div class="t" style="left:1345.00px;top:659.46px;font-size:18px;color:#2F6FD8;font-weight:400;">Edit</div>
<div class="b" style="left:238.30px;top:710.30px;width:1165.90px;height:195.00px;background:#fff;border:1px solid #E2E6EC;border-radius:7px;box-sizing:border-box"></div>
<div class="t" style="left:257.20px;top:730.56px;font-size:18px;color:#1A1A1A;font-weight:400;">My Details</div>
<div class="t" style="left:257.10px;top:769.96px;font-size:16px;color:#6C737E;font-weight:400;">First Name</div>
<div class="t" style="left:257.30px;top:800.56px;font-size:18px;color:#1B1B1B;font-weight:400;letter-spacing:0px">Charles</div>
<div class="t" style="left:545.60px;top:769.96px;font-size:16px;color:#6C737E;font-weight:400;">Last Name</div>
<div class="t" style="left:545.80px;top:800.56px;font-size:18px;color:#1B1B1B;font-weight:400;letter-spacing:0px">Rich</div>
<div class="t" style="left:834.30px;top:769.96px;font-size:16px;color:#6C737E;font-weight:400;">Employee ID</div>
<div class="t" style="left:834.50px;top:800.56px;font-size:18px;color:#1B1B1B;font-weight:400;letter-spacing:0.5px">65456</div>
<div class="t" style="left:1123.00px;top:769.96px;font-size:16px;color:#6C737E;font-weight:400;">Phone No.</div>
<div class="t" style="left:1123.20px;top:800.56px;font-size:18px;color:#1B1B1B;font-weight:400;letter-spacing:0.25px">4670123456</div>
<div class="t" style="left:257.10px;top:838.26px;font-size:16px;color:#6C737E;font-weight:400;">Email ID</div>
<div class="t" style="left:257.30px;top:868.96px;font-size:18px;color:#1B1B1B;font-weight:400;letter-spacing:0.17px">charlesrich077@gmail.com</div>
<div class="t" style="left:545.60px;top:838.26px;font-size:16px;color:#6C737E;font-weight:400;">User Name</div>
<div class="t" style="left:545.80px;top:868.96px;font-size:18px;color:#1B1B1B;font-weight:400;letter-spacing:0.17px">charlesrich077@gmail.com</div>
<div class="t" style="left:834.30px;top:838.26px;font-size:16px;color:#6C737E;font-weight:400;">Active Roles</div>
<div class="t" style="left:834.50px;top:868.96px;font-size:18px;color:#1B1B1B;font-weight:400;letter-spacing:-0.55px">ADMIN, SUPER_ADMIN</div>
<div class="b" style="left:238.30px;top:924.70px;width:1165.90px;height:195.00px;background:#fff;border:1px solid #E2E6EC;border-radius:7px;box-sizing:border-box"></div>
<div class="t" style="left:257.20px;top:944.96px;font-size:18px;color:#1A1A1A;font-weight:400;">Address Details</div>
<div class="t" style="left:257.10px;top:984.36px;font-size:16px;color:#6C737E;font-weight:400;">Country</div>
<div class="t" style="left:257.30px;top:1014.96px;font-size:18px;color:#1B1B1B;font-weight:400;letter-spacing:0px">Sweden</div>
<div class="t" style="left:545.60px;top:984.36px;font-size:16px;color:#6C737E;font-weight:400;">State</div>
<div class="t" style="left:545.80px;top:1014.96px;font-size:18px;color:#1B1B1B;font-weight:400;letter-spacing:0px">-</div>
<div class="t" style="left:834.30px;top:984.36px;font-size:16px;color:#6C737E;font-weight:400;">City</div>
<div class="t" style="left:834.50px;top:1014.96px;font-size:18px;color:#1B1B1B;font-weight:400;letter-spacing:0px">Solna</div>
<div class="t" style="left:1123.00px;top:984.36px;font-size:16px;color:#6C737E;font-weight:400;">Street</div>
<div class="t" style="left:1123.20px;top:1014.96px;font-size:18px;color:#1B1B1B;font-weight:400;letter-spacing:0px">Parkv&auml;gen</div>
<div class="t" style="left:257.10px;top:1052.66px;font-size:16px;color:#6C737E;font-weight:400;">Post Box</div>
<div class="t" style="left:257.30px;top:1083.36px;font-size:18px;color:#1B1B1B;font-weight:400;letter-spacing:0px">-</div>
<div class="t" style="left:545.60px;top:1052.66px;font-size:16px;color:#6C737E;font-weight:400;">Postal Code</div>
<div class="t" style="left:545.80px;top:1083.36px;font-size:18px;color:#1B1B1B;font-weight:400;letter-spacing:0.5px">170</div>
<div class="b" style="left:1390.80px;top:1130.00px;width:50.48px;height:49.80px;background:#3474D6;border-radius:8px 0 0 8px"></div>
<svg class="b" style="left:1395.00px;top:1135.00px;" width="40" height="40" viewBox="1395 1135 40 40"><polygon points="1415.55,1143.4 1425.7,1149.55325 1425.7,1160.14675 1415.55,1166.3 1405.4,1160.14675 1405.4,1149.55325" fill="#fff"/><line x1="1403.4" y1="1154.43" x2="1427.7" y2="1141.07" stroke="#3474D6" stroke-width="1.15"/><line x1="1403.4" y1="1159.24" x2="1427.7" y2="1145.88" stroke="#3474D6" stroke-width="1.15"/><line x1="1403.4" y1="1164.05" x2="1427.7" y2="1150.69" stroke="#3474D6" stroke-width="1.15"/><line x1="1403.4" y1="1169.32" x2="1427.7" y2="1155.95" stroke="#3474D6" stroke-width="1.15"/></svg>
  </div>
</div>
</body></html>
